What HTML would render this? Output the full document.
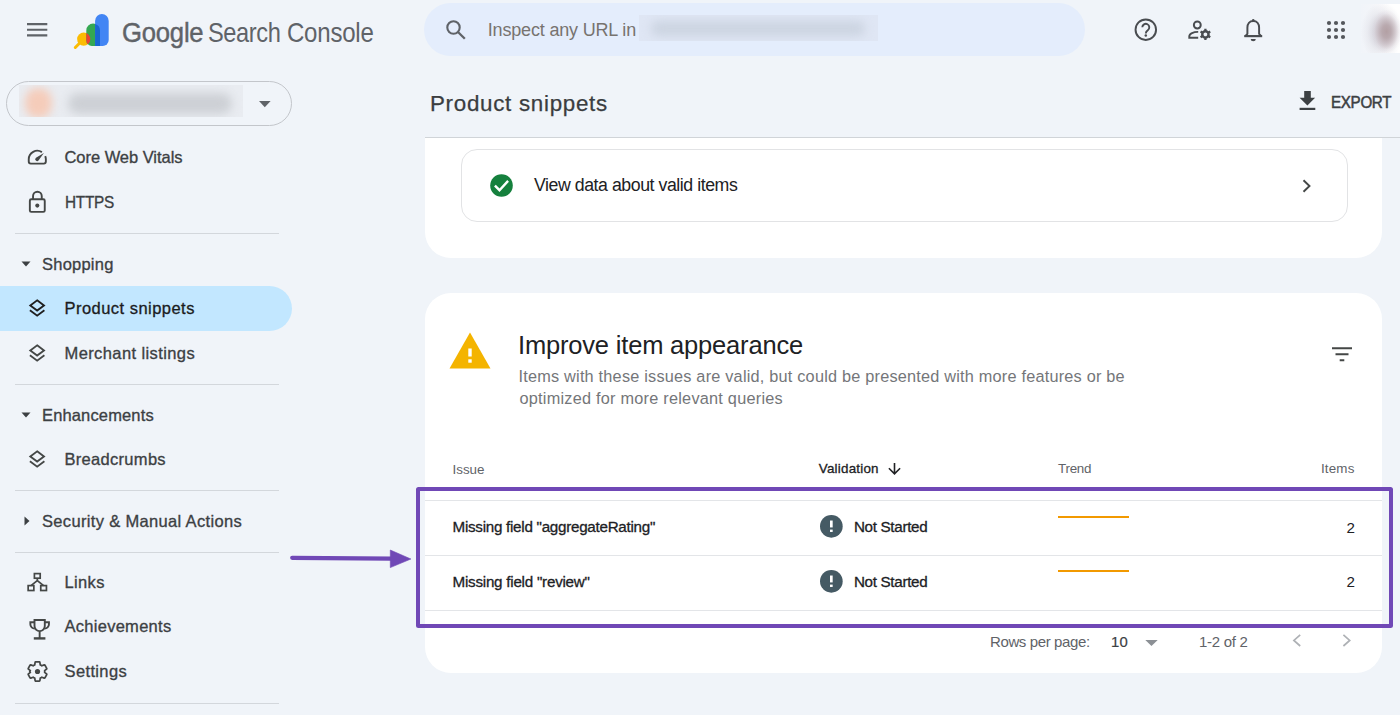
<!DOCTYPE html>
<html lang="en">
<head>
<meta charset="utf-8">
<title>Product snippets - Google Search Console</title>
<style>
*{box-sizing:border-box;margin:0;padding:0}
html,body{width:1400px;height:715px;overflow:hidden}
body{background:#f0f4f9;font-family:"Liberation Sans",Arial,sans-serif;color:#1f1f1f;position:relative}
.abs{position:absolute}
.t{position:absolute;white-space:nowrap;line-height:1;transform:translateY(-50%)}
.nav{font-size:16px;color:#2b2d2f;letter-spacing:.35px}
.sec{font-size:16px;color:#3c4043;letter-spacing:.3px}
.hr{position:absolute;left:15px;width:264px;height:1px;background:#d3d7dc}
.ico{position:absolute;overflow:visible}
.card{position:absolute;background:#fff}
.th{font-size:13px;color:#5f6368}
.td{font-size:14px;color:#202124}
.pg{font-size:14px;color:#5f6368}
.rowline{position:absolute;left:425px;width:957px;height:1px;background:#e3e5e8}

.t{transform-origin:0 50%}
.nav{color:#3c4043;-webkit-text-stroke:.32px #3c4043}
.sec{color:#3c4043;-webkit-text-stroke:.32px #3c4043}
#n3{color:#1b1c1e;-webkit-text-stroke:.3px #1b1c1e}
.gs{color:#5f6368}
#g1{-webkit-text-stroke:.45px #5f6368}
#insp{color:#77736f}
#ptitle{color:#3a3d40;-webkit-text-stroke:.25px #3a3d40}
#exp{color:#3c4043;-webkit-text-stroke:.5px #3c4043}
#vd{color:#202124}
#h2{color:#202124}
#sub1,#sub2{color:#747679}
#th2{color:#202124;-webkit-text-stroke:.3px #202124}
#r1,#r2,#ns1,#ns2{color:#202124;-webkit-text-stroke:.3px #202124}
#ten{color:#3c4043;-webkit-text-stroke:.2px #3c4043}
</style>
</head>
<body>

<!-- ===== top bar ===== -->
<svg class="ico" style="left:27px;top:22px" width="21" height="16" viewBox="0 0 21 16"><path d="M0 2.100h20.300M0 7.800h20.300M0 13.400h20.300" stroke="#5f6368" stroke-width="2.100" fill="none"/></svg>

<!-- logo -->
<svg class="ico" style="left:70px;top:10px" width="44" height="44" viewBox="70 10 44 44">
  <defs><clipPath id="gclip"><path d="M86.300 30.400a6.850 6.850 0 0 1 13.700 0v15.500h-8.200a5.500 5.500 0 0 1-5.500-5.500z"/></clipPath></defs>
  <path d="M75.300 47.500L80 42.800" stroke="#fbbc04" stroke-width="3" stroke-linecap="round"/>
  <circle cx="83.700" cy="39.100" r="6.600" fill="#fbbc04"/>
  <path d="M86.300 30.400a6.850 6.850 0 0 1 13.700 0v15.500h-8.200a5.500 5.500 0 0 1-5.500-5.500z" fill="#34a853"/>
  <circle cx="83.700" cy="39.100" r="6.600" fill="#ea4335" clip-path="url(#gclip)"/>
  <path d="M95.100 20.900a6.800 6.800 0 0 1 13.600 0v19a6 6 0 0 1-6 6h-7.600z" fill="#4285f4"/>
  <path d="M95.100 20.900v25h4.900v-15.500a6.850 6.850 0 0 0-4.900-6.500z" fill="#1967d2"/>
</svg>
<div class="t gs" id="g1" style="left:121.50px;top:32.58px;font-size:27.5px;letter-spacing:-0.236px;transform:translateY(-50%) scaleX(0.9329)">Google</div><div class="t gs" id="g2" style="left:208.25px;top:32.58px;font-size:27.5px;letter-spacing:-0.450px;transform:translateY(-50%) scaleX(0.8580)">Search</div><div class="t gs" id="g3" style="left:286.50px;top:32.58px;font-size:27.5px;letter-spacing:-0.259px;transform:translateY(-50%) scaleX(0.8736)">Console</div>

<!-- search -->
<div class="abs" style="left:424px;top:3px;width:661px;height:53px;border-radius:27px;background:#e4edfc"></div>
<svg class="ico" style="left:445px;top:19px" width="22" height="22" viewBox="0 0 22 22"><circle cx="8.500" cy="8.500" r="6.200" stroke="#5f6368" stroke-width="2.100" fill="none"/><path d="M13 13l6.800 6.800" stroke="#5f6368" stroke-width="2.300"/></svg>
<div class="t" id="insp" style="left:487.75px;top:30.05px;font-size:18px;letter-spacing:-0.176px">Inspect any URL in</div>
<div class="abs" style="left:638.500px;top:15px;width:239.500px;height:25.500px;background:#dfe6f4;overflow:hidden"><div class="abs" style="left:12px;top:6px;width:214px;height:15px;border-radius:7px;background:#ccd4e1;filter:blur(5px)"></div></div>

<!-- top right icons -->
<svg class="ico" style="left:1132px;top:16px" width="28" height="28" viewBox="1132 16 28 28"><circle cx="1145.800" cy="29.650" r="10.250" stroke="#494c50" stroke-width="1.950" fill="none"/><path d="M1142.300 27.300a3.500 3.500 0 1 1 5.500 2.900c-1.300.9-2 1.600-2 3.200" stroke="#494c50" stroke-width="1.900" fill="none"/><circle cx="1145.800" cy="35.600" r="1.250" fill="#494c50"/></svg>
<svg class="ico" style="left:1184px;top:16px" width="32" height="28" viewBox="1184 16 32 28"><g stroke="#494c50" fill="none"><circle cx="1197.300" cy="25" r="3.450" stroke-width="1.950"/><path d="M1198.200 31.900c-4.600-.1-8.900 1.600-8.900 4.400v1.450h8.900" stroke-width="1.950"/><g transform="translate(1205.400 34.400)"><circle r="3.100" stroke-width="2.500"/><path d="M0-5.600v2.300M0 5.600v-2.300M-4.850-2.800l2 1.150M4.850 2.800l-2-1.150M-4.850 2.800l2-1.150M4.850-2.800l-2 1.150" stroke-width="2.300"/></g></g></svg>
<svg class="ico" style="left:1240px;top:16px" width="28" height="28" viewBox="1240 16 28 28"><path d="M1253.250 20.900c-3.700 0-5.850 2.900-5.850 6.600v6.300l-1.900 2.050v.3h15.500v-.3l-1.900-2.050v-6.300c0-3.700-2.150-6.600-5.850-6.600z" stroke="#494c50" stroke-width="1.950" fill="none" stroke-linejoin="round"/><path d="M1244.300 36.150h17.900" stroke="#494c50" stroke-width="2.100"/><circle cx="1253.250" cy="20.300" r="1.250" fill="#494c50"/><path d="M1250.700 38.900a2.550 2.300 0 0 0 5.100 0z" fill="#494c50"/></svg>
<svg class="ico" style="left:1326px;top:20px" width="20" height="20" viewBox="0 0 20 20" fill="#54575c"><circle cx="3" cy="3" r="2.100"/><circle cx="10" cy="3" r="2.100"/><circle cx="17" cy="3" r="2.100"/><circle cx="3" cy="10" r="2.100"/><circle cx="10" cy="10" r="2.100"/><circle cx="17" cy="10" r="2.100"/><circle cx="3" cy="17" r="2.100"/><circle cx="10" cy="17" r="2.100"/><circle cx="17" cy="17" r="2.100"/></svg>
<!-- blurred avatar -->
<div class="abs" style="left:1361px;top:4px;width:39px;height:49px;background:radial-gradient(ellipse 15px 22px at 25.500px 27.500px,#b3a0a4 0%,rgba(182,165,170,.9) 30%,rgba(196,182,188,.6) 60%,rgba(215,205,212,.25) 82%,rgba(230,225,232,0) 100%),radial-gradient(ellipse 21px 30px at 21px 28px,rgba(190,186,196,.75) 0%,rgba(200,198,208,.6) 40%,rgba(218,218,226,.35) 70%,rgba(235,237,243,0) 100%),linear-gradient(90deg,#f1f4f9 0%,#f3f5f9 30%,#fbfbfd 55%,#ffffff 70%)"></div>

<!-- ===== sidebar ===== -->
<div class="abs" style="left:6px;top:81px;width:286px;height:45px;border-radius:23px;border:1px solid #c3c6cb"></div>
<div class="abs" style="left:19px;top:85px;width:224px;height:32px;background:#e9ecf1;overflow:hidden"><div class="abs" style="left:6px;top:3px;width:27px;height:30px;border-radius:45%;background:#f5ccba;filter:blur(4.500px)"></div><div class="abs" style="left:49px;top:8px;width:164px;height:21px;border-radius:10px;background:#cdd0d5;filter:blur(5px)"></div></div>
<svg class="ico" style="left:258.800px;top:101px" width="12" height="6.500" viewBox="0 0 12 6.500"><path d="M0 0h11.600L5.800 6.200z" fill="#5f6368"/></svg>

<!-- selected pill -->
<div class="abs" style="left:0;top:286px;width:292px;height:45px;border-radius:0 23px 23px 0;background:#c2e7ff"></div>

<!-- nav icons -->
<svg class="ico" style="left:24px;top:146px" width="28" height="24" viewBox="24 146 28 24"><g stroke="#444746" stroke-width="1.900" fill="none" stroke-linecap="butt"><path d="M41.900 152.100A8.550 8.550 0 0 0 28.750 159.300V161.600a2 2 0 0 0 2 2H43.850a2 2 0 0 0 2-2V159.300a8.550 8.550 0 0 0-.620-3.200"/></g><path d="M43.900 152.900L38.700 160.300a1.900 1.900 0 1 1-2.700-2.600z" fill="#444746"/></svg>
<svg class="ico" style="left:24px;top:188px" width="28" height="28" viewBox="24 188 28 28"><g stroke="#444746" stroke-width="1.900" fill="none"><rect x="29.850" y="199.250" width="14.900" height="12.600" rx="1.400"/><path d="M33.050 199.300V196.100a4.350 4.350 0 0 1 8.700 0V199.300"/></g><circle cx="37.300" cy="205.600" r="2.050" fill="#444746"/></svg>

<svg class="ico" style="left:21.200px;top:261.400px" width="10" height="6" viewBox="0 0 10 6"><path d="M.5.500h9L5 5.500z" fill="#3c4043"/></svg>
<svg class="ico" style="left:26px;top:296px" width="24" height="24" viewBox="26 296 24 24"><g stroke="#1f1f1f" stroke-width="1.850" fill="none"><path d="M37.150 300.330L44 305.450 37.150 310.570 30.300 305.450z"/><path d="M29.900 310.200L37.150 315.700 44.400 310.200"/></g></svg>
<svg class="ico" style="left:26px;top:341px" width="24" height="24" viewBox="26 296 24 24"><g stroke="#444746" stroke-width="1.850" fill="none"><path d="M37.150 300.330L44 305.450 37.150 310.570 30.300 305.450z"/><path d="M29.900 310.200L37.150 315.700 44.400 310.200"/></g></svg>
<svg class="ico" style="left:21.200px;top:412.200px" width="10" height="6" viewBox="0 0 10 6"><path d="M.5.500h9L5 5.500z" fill="#3c4043"/></svg>
<svg class="ico" style="left:26px;top:447px" width="24" height="24" viewBox="26 296 24 24"><g stroke="#444746" stroke-width="1.850" fill="none"><path d="M37.150 300.330L44 305.450 37.150 310.570 30.300 305.450z"/><path d="M29.900 310.200L37.150 315.700 44.400 310.200"/></g></svg>
<svg class="ico" style="left:23.700px;top:516.200px" width="6" height="10" viewBox="0 0 6 10"><path d="M.5.500v9L5.500 5z" fill="#3c4043"/></svg>
<!-- links -->
<svg class="ico" style="left:24px;top:569px" width="28" height="26" viewBox="24 569 28 26"><g stroke="#444746" stroke-width="1.700" fill="none"><rect x="34.400" y="573.600" width="5.800" height="4.600"/><rect x="28.150" y="585.600" width="5.700" height="4.900"/><rect x="40.750" y="585.600" width="5.700" height="4.900"/><path d="M37.300 578.200V581M31 585.600L37.300 580.600 43.600 585.600"/></g></svg>
<!-- trophy -->
<svg class="ico" style="left:26px;top:616px" width="28" height="26" viewBox="26 616 28 26"><g stroke="#444746" stroke-width="1.900" fill="none"><path d="M34.500 620.050H44.800V626a5.150 5.150 0 0 1-10.300 0z"/><path d="M34.500 622.300H30.350V624.300a4.300 4.300 0 0 0 4.500 4.300M44.800 622.300H48.950V624.300a4.300 4.300 0 0 1-4.500 4.300"/><path d="M39.650 631.200V638"/><path d="M33.800 638.400H45.400" stroke-width="2.400"/></g></svg>
<!-- settings gear -->
<svg class="ico" style="left:26px;top:660px" width="23" height="23" viewBox="0 0 24 24"><path d="M19.430 12.980c.04-.32.070-.640.070-.980s-.030-.660-.070-.980l2.110-1.650a.5.500 0 0 0 .120-.640l-2-3.460a.5.500 0 0 0-.610-.220l-2.490 1a7.300 7.300 0 0 0-1.690-.980l-.380-2.650A.49.490 0 0 0 14 2h-4a.49.490 0 0 0-.490.420l-.380 2.650c-.610.250-1.170.590-1.690.980l-2.490-1a.49.490 0 0 0-.610.220l-2 3.460a.49.490 0 0 0 .120.640l2.110 1.650c-.4.320-.70.650-.70.980s.30.660.70.980l-2.110 1.650a.5.500 0 0 0-.120.640l2 3.460c.120.220.390.300.610.220l2.490-1c.520.400 1.080.730 1.690.980l.380 2.650c.3.240.24.420.490.420h4c.250 0 .460-.180.490-.420l.380-2.650a7.300 7.300 0 0 0 1.690-.980l2.490 1c.230.090.490 0 .610-.220l2-3.460a.5.500 0 0 0-.120-.640z" fill="none" stroke="#444746" stroke-width="1.800" stroke-linejoin="round"/><circle cx="12" cy="12" r="2.700" fill="#444746"/></svg>

<!-- nav text -->
<div class="t nav" id="n1" style="left:64.50px;top:157.05px;font-size:16.5px;letter-spacing:-0.043px">Core Web Vitals</div>
<div class="t nav" id="n2" style="left:64.50px;top:201.55px;font-size:16.5px;letter-spacing:-0.316px;transform:translateY(-50%) scaleX(0.9305)">HTTPS</div>
<div class="hr" style="top:233px"></div>
<div class="t sec" id="s1" style="left:42.00px;top:263.55px;font-size:16.5px;letter-spacing:0.229px">Shopping</div>
<div class="t nav" id="n3" style="left:64.50px;top:308.05px;font-size:16.5px;letter-spacing:0.467px">Product snippets</div>
<div class="t nav" id="n4" style="left:64.50px;top:353.05px;font-size:16.5px;letter-spacing:0.400px">Merchant listings</div>
<div class="hr" style="top:384px"></div>
<div class="t sec" id="s2" style="left:42.00px;top:414.55px;font-size:16.5px;letter-spacing:0.145px">Enhancements</div>
<div class="t nav" id="n5" style="left:64.50px;top:458.55px;font-size:16.5px;letter-spacing:0.300px">Breadcrumbs</div>
<div class="hr" style="top:490px"></div>
<div class="t sec" id="s3" style="left:42.00px;top:520.55px;font-size:16.5px;letter-spacing:0.333px">Security &amp; Manual Actions</div>
<div class="hr" style="top:552px"></div>
<div class="t nav" id="n6" style="left:64.50px;top:581.55px;font-size:16.5px">Links</div>
<div class="t nav" id="n7" style="left:64.50px;top:626.05px;font-size:16.5px;letter-spacing:0.273px">Achievements</div>
<div class="t nav" id="n8" style="left:64.50px;top:671.05px;font-size:16.5px;letter-spacing:0.371px">Settings</div>
<div class="hr" style="top:703px"></div>

<!-- ===== main header ===== -->
<div class="t" id="ptitle" style="left:429.50px;top:105.06px;font-size:21.5px;letter-spacing:0.684px;transform:translateY(-50%) scaleX(1.0396)">Product snippets</div>
<svg class="ico" style="left:1299.200px;top:91.200px" width="17" height="20" viewBox="0 0 17 20"><path d="M5.200 0h6.600v6.700h4.300L8.400 14.400.6 6.700h4.600z" fill="#3c4043"/><rect x=".6" y="16.800" width="15.700" height="2.200" fill="#3c4043"/></svg>
<div class="t" id="exp" style="left:1330.50px;top:102.55px;font-size:16px;letter-spacing:-0.345px;transform:translateY(-50%) scaleX(0.9484)">EXPORT</div>
<div class="abs" style="left:425px;top:137px;width:975px;height:1px;background:#d0d4d8"></div>

<!-- ===== card 1 ===== -->
<div class="card" style="left:425px;top:138px;width:957px;height:120px;border-radius:0 0 26px 26px"></div>
<div class="abs" style="left:461px;top:149px;width:887px;height:73px;border:1px solid #e2e3e5;border-radius:16px"></div>
<svg class="ico" style="left:490.400px;top:174px" width="23" height="23" viewBox="0 0 23 23"><circle cx="11.500" cy="11.500" r="11.300" fill="#15803d"/><path d="M4.900 11.600l4.600 4.600 8.600-9.300" stroke="#fff" stroke-width="2.400" fill="none"/></svg>
<div class="t" id="vd" style="left:533.75px;top:185.05px;font-size:18px;letter-spacing:-0.450px;transform:translateY(-50%) scaleX(0.9840)">View data about valid items</div>
<svg class="ico" style="left:1302px;top:179px" width="10" height="14" viewBox="0 0 10 14"><path d="M1.500 1.200l6 5.800-6 5.800" stroke="#444746" stroke-width="1.900" fill="none"/></svg>

<!-- ===== card 2 ===== -->
<div class="card" style="left:425px;top:293px;width:957px;height:380px;border-radius:26px"></div>
<svg class="ico" style="left:449px;top:332px" width="42" height="37" viewBox="0 0 42 37"><path d="M21 .500L41.500 36.500H.5z" fill="#f4b400"/><rect x="19.300" y="16.500" width="3.400" height="8" fill="#fff"/><rect x="19.300" y="27.300" width="3.400" height="3.400" fill="#fff"/></svg>
<div class="t" id="h2" style="left:518.00px;top:346.08px;font-size:25.5px;letter-spacing:-0.182px">Improve item appearance</div>
<div class="t" id="sub1" style="left:518.50px;top:375.70px;font-size:16.3px;letter-spacing:0.210px">Items with these issues are valid, but could be presented with more features or be</div>
<div class="t" id="sub2" style="left:519.50px;top:398.10px;font-size:16.3px;letter-spacing:0.235px">optimized for more relevant queries</div>
<svg class="ico" style="left:1332px;top:347px" width="20" height="15" viewBox="0 0 20 15"><path d="M0 1.200h20M3.500 7.200h13M7.700 13.300h4.600" stroke="#444746" stroke-width="2.100"/></svg>

<!-- table header -->
<div class="t th" id="th1" style="left:452.50px;top:469.54px;font-size:13.4px">Issue</div>
<div class="t th" id="th2" style="left:818.75px;top:469.04px;font-size:13.4px;letter-spacing:0.222px">Validation</div>
<svg class="ico" style="left:887.600px;top:462px" width="13" height="13" viewBox="0 0 13 13"><path d="M6.500 1.100v10.700M.9 6.300l5.600 5.600 5.600-5.600" stroke="#202124" stroke-width="1.600" fill="none"/></svg>
<div class="t th" id="th3" style="left:1058.00px;top:469.04px;font-size:13.4px;letter-spacing:-0.250px">Trend</div>
<div class="t th" id="th4" style="left:1321.00px;top:469.04px;font-size:13.4px;letter-spacing:0.150px">Items</div>

<div class="rowline" style="top:500px"></div>
<div class="rowline" style="top:555px"></div>
<div class="rowline" style="top:610px"></div>

<!-- row 1 -->
<div class="t td" id="r1" style="left:452.50px;top:527.30px;font-size:15.2px;letter-spacing:-0.267px">Missing field "aggregateRating"</div>
<svg class="ico" style="left:820.300px;top:515px" width="22.700" height="22.700" viewBox="0 0 22 22"><circle cx="11" cy="11" r="11" fill="#455a64"/><rect x="9.700" y="5.350" width="2.600" height="6.700" fill="#fff"/><rect x="9.700" y="14.150" width="2.600" height="2.300" fill="#fff"/></svg>
<div class="t td" id="ns1" style="left:853.90px;top:527.30px;font-size:15.2px;letter-spacing:-0.300px">Not Started</div>
<div class="abs" style="left:1057.500px;top:515.800px;width:71.300px;height:2px;background:#f29900"></div>
<div class="t td" id="c1" style="left:1346.50px;top:527.55px;font-size:15.2px">2</div>

<!-- row 2 -->
<div class="t td" id="r2" style="left:452.50px;top:581.70px;font-size:15.2px;letter-spacing:-0.238px">Missing field "review"</div>
<svg class="ico" style="left:820.300px;top:569.700px" width="22.700" height="22.700" viewBox="0 0 22 22"><circle cx="11" cy="11" r="11" fill="#455a64"/><rect x="9.700" y="5.350" width="2.600" height="6.700" fill="#fff"/><rect x="9.700" y="14.150" width="2.600" height="2.300" fill="#fff"/></svg>
<div class="t td" id="ns2" style="left:853.90px;top:581.70px;font-size:15.2px;letter-spacing:-0.300px">Not Started</div>
<div class="abs" style="left:1057.500px;top:570.250px;width:71.300px;height:2px;background:#f29900"></div>
<div class="t td" id="c2" style="left:1346.50px;top:582.05px;font-size:15.2px">2</div>

<!-- pagination -->
<div class="t pg" id="rpp" style="left:990.00px;top:641.04px;font-size:15px;letter-spacing:-0.385px">Rows per page:</div>
<div class="t pg" id="ten" style="left:1111.00px;top:641.04px;font-size:15px;letter-spacing:0.358px;transform:translateY(-50%) scaleX(0.9906)">10</div>
<svg class="ico" style="left:1145px;top:639.500px" width="13" height="7" viewBox="0 0 13 7"><path d="M.3 0h12.400L6.500 6.100z" fill="#8c9095"/></svg>
<div class="t pg" id="of" style="left:1199.00px;top:641.04px;font-size:15px;letter-spacing:-0.286px">1-2 of 2</div>
<svg class="ico" style="left:1292px;top:633px" width="10" height="15" viewBox="1292 633 10 15"><path d="M1300.200 634.900L1293.900 640.450 1300.200 646" stroke="#aeb1b5" stroke-width="1.700" fill="none"/></svg>
<svg class="ico" style="left:1341px;top:633px" width="10" height="15" viewBox="1341 633 10 15"><path d="M1343.400 634.900L1349.700 640.450 1343.400 646" stroke="#aeb1b5" stroke-width="1.700" fill="none"/></svg>

<!-- ===== annotation ===== -->
<div class="abs" style="left:415.600px;top:486.700px;width:977.500px;height:141.300px;border:4.300px solid #7048b6;border-radius:2.500px"></div>
<svg class="ico" style="left:284px;top:544px" width="132" height="30" viewBox="284 544 132 30"><path d="M292.200 557.800L392 558.600" stroke="#7048b6" stroke-width="4.200" stroke-linecap="round"/><path d="M390.300 550L410.900 559 390.300 567.600z" fill="#7048b6" stroke="#7048b6" stroke-width=".6" stroke-linejoin="round"/></svg>

</body>
</html>
